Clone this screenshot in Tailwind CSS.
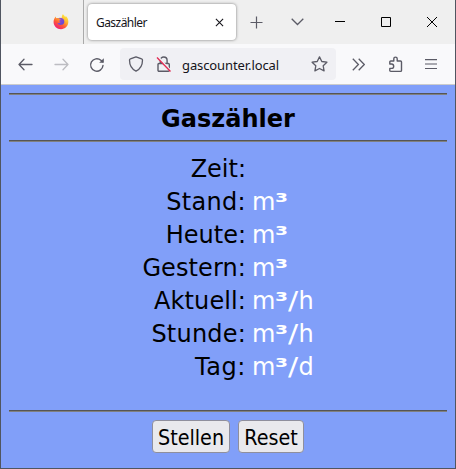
<!DOCTYPE html>
<html lang="de">
<head>
<meta charset="utf-8">
<title>Gaszähler</title>
<script src="https://cdn.jsdelivr.net/npm/@tailwindcss/browser@4"></script>
</head>
<body class="w-[456px] h-[469px] overflow-hidden bg-[#505560]">
<div class="flex flex-col w-[456px] h-[469px] border-x border-b border-[#505560] overflow-hidden">
  <header class="flex h-[44px] shrink-0 bg-[#efefef] font-['Noto_Sans',sans-serif]">
    <div class="w-[83px] shrink-0 border-r border-[#aaaaaa] pl-[52px] pt-[14px]">
      <svg class="block" width="16" height="16" viewBox="0 0 17 17">
        <defs>
          <linearGradient id="fox" x1=".85" y1=".05" x2=".25" y2="1"><stop offset="0" stop-color="#fff044"/><stop offset=".35" stop-color="#ffb52e"/><stop offset=".65" stop-color="#ff5a36"/><stop offset="1" stop-color="#ee1680"/></linearGradient>
          <linearGradient id="globe" x1="0" y1="0" x2="1" y2="1"><stop offset="0" stop-color="#a249cf"/><stop offset="1" stop-color="#5848d7"/></linearGradient>
        </defs>
        <path fill="url(#fox)" d="M10.3.2c1.3.8 2 1.8 2.5 3 .5-.1.8-.5.9-1 1.700 1.500 2.600 3.700 2.600 6.100 0 4.500-3.500 7.900-7.800 7.900S.6 12.800.6 8.500C.6 6.300 1.500 4.200 3 2.700c0 .8.2 1.300.5 1.700.8-.3 1.700-.3 2.500-.1 1-.3 2.100-.3 3 .1C9.300 2.800 9.700 1.500 10.300.2Z"/>
        <path fill="url(#globe)" d="M5.500 5.200c1.800-1.300 4.600-1.100 6 .8 1.300 2.300.2 5-2.500 5.500-2 .4-3.800-.6-4.400-2.300 1.400.8 2.800.2 3.500-.7-1.300 0-1.700-.7-1.500-1.300.5-.6 1.400-.5 2-.8-.8-.9-1.900-1.100-3.100-1.200Z"/>
      </svg>
    </div>
    <div class="ml-[4px] mt-[4px] flex h-[36px] w-[148px] shrink-0 items-center justify-between rounded-[4px] bg-white pl-[8px] pr-[12px] shadow-[0_0_3px_rgba(0,0,0,0.5)]">
      <span class="text-[12px] leading-[16px] tracking-[-0.55px] text-[#15141a] pt-px">Gaszähler</span>
      <svg width="9" height="9" viewBox="0 0 10 10" fill="none" stroke="#15141a" stroke-width="1.2"><path d="M1 1l8 8M9 1L1 9"/></svg>
    </div>
    <svg class="ml-[14px] mt-[16px] shrink-0" width="13" height="13" viewBox="0 0 13 13" fill="none" stroke="#5b5b66" stroke-width="1.2"><path d="M6.500.5v12M.5 6.500h12"/></svg>
    <svg class="ml-[28px] mt-[18px] shrink-0" width="13" height="8" viewBox="0 0 13 8" fill="none" stroke="#5b5b66" stroke-width="1.3"><path d="M.7.8l5.800 5.700L12.300.8"/></svg>
    <svg class="ml-[31px] mt-[17px] shrink-0" width="11" height="10" viewBox="0 0 11 10"><path d="M0 4.500h10" stroke="#000"/></svg>
    <svg class="ml-[35px] mt-[17px] shrink-0" width="10" height="10" viewBox="0 0 10 10"><path d="M.5.5h9v9h-9z" fill="none" stroke="#000"/></svg>
    <svg class="ml-[36px] mt-[17px] shrink-0" width="10" height="10" viewBox="0 0 10 10"><path d="M0 0l10 10M10 0L0 10" fill="none" stroke="#000" stroke-width="1"/></svg>
  </header>
  <nav class="flex h-[41px] shrink-0 border-b border-[#cccccc] bg-[#f9f9fb] font-['Noto_Sans',sans-serif]">
    <svg class="ml-[17px] mt-[14px] shrink-0" width="15" height="13" viewBox="0 0 15 13" fill="none" stroke="#5b5b66" stroke-width="1.3" stroke-linecap="round" stroke-linejoin="round"><path d="M14 6.500H1M6 1.300L1 6.500l5 5.200"/></svg>
    <svg class="ml-[21px] mt-[14px] shrink-0" width="15" height="13" viewBox="0 0 15 13" fill="none" stroke="#bdbdc2" stroke-width="1.3" stroke-linecap="round" stroke-linejoin="round"><path d="M1 6.500h13M9 1.300l5 5.200-5 5.200"/></svg>
    <svg class="ml-[20px] mt-[13px] shrink-0" width="16" height="16" viewBox="0 0 16 16" fill="none" stroke="#5b5b66" stroke-width="1.4" stroke-linecap="round"><path d="M14 8.500a6.200 6.200 0 1 1-2.100-5.200l1.600 1.500"/><path d="M14.800 1.200v4.600h-4.600z" fill="#5b5b66" stroke="none"/></svg>
    <div class="ml-[15px] mt-[4px] flex h-[32px] w-[216px] shrink-0 rounded-[4px] bg-[#f0f0f4]">
      <svg class="ml-[8px] mt-[8px] shrink-0" width="16" height="16" viewBox="0 0 16 16" fill="none" stroke="#5b5b66" stroke-width="1.3" stroke-linejoin="round"><path d="M8 .8l5.600 2.100c.6.200.9.600.9 1.200 0 4.800-2 9-6.500 11.100C3.500 13.100 1.500 8.900 1.500 4.100c0-.6.300-1 .9-1.200z"/></svg>
      <svg class="ml-[12px] mt-[8px] shrink-0" width="16" height="17" viewBox="0 0 16 17" fill="none"><path d="M4.300 7.500V4.400a3.400 3.400 0 0 1 6.800 0v3.100M3 7.500h9.300a1 1 0 0 1 1 1v5.700a1 1 0 0 1-1 1H3a1 1 0 0 1-1-1V8.500a1 1 0 0 1 1-1z" stroke="#5b5b66" stroke-width="1.4"/><path d="M1.800.8l13 14.200" stroke="#f0f0f4" stroke-width="2"/><path d="M1 1.500l13.500 14" stroke="#e22850" stroke-width="1.300"/></svg>
      <span class="ml-[10px] mt-[8px] w-[98px] shrink-0 whitespace-nowrap text-[13px] leading-[18px] tracking-[-0.1px] text-[#15141a]">gascounter.local</span>
      <svg class="ml-[31px] mt-[8px] shrink-0" width="17" height="16" viewBox="0 0 17 16" fill="none" stroke="#5b5b66" stroke-width="1.3" stroke-linejoin="round"><path d="M8.500.9l2.300 4.600 5.100.7-3.700 3.600.9 5.100-4.600-2.400-4.600 2.400.9-5.100L1.100 6.200l5.100-.7z"/></svg>
    </div>
    <svg class="ml-[16px] mt-[14px] shrink-0" width="13" height="13" viewBox="0 0 13 13" fill="none" stroke="#5b5b66" stroke-width="1.3"><path d="M.8.800L6.400 6.500.8 12.200M6.700.8l5.600 5.700-5.600 5.700"/></svg>
    <svg class="ml-[23px] mt-[12px] shrink-0" width="16" height="17" viewBox="0 0 16 17" fill="none" stroke="#5b5b66" stroke-width="1.4" stroke-linejoin="round"><path d="M1.800 8V6a1 1 0 0 1 1-1h3V2.800a1.700 1.700 0 0 1 3.400 0V5h3.300a1 1 0 0 1 1 1v8.400a1 1 0 0 1-1 1H2.800a1 1 0 0 1-1-1v-2h1.700a2.200 2.200 0 0 0 0-4.400z"/></svg>
    <svg class="ml-[21px] mt-[15px] shrink-0" width="12" height="11" viewBox="0 0 12 11" stroke="#5b5b66" stroke-width="1.200"><path d="M0 .6h12M0 5h12M0 9.500h12"/></svg>
  </nav>
  <main class="flex-1 bg-[#819ff9] px-[8px] pt-[8px] font-['DejaVu_Sans',sans-serif] text-black">
    <hr class="h-[2px] border-0 border-t border-b border-t-[#555555] border-b-[#808080]">
    <h1 class="h-[45px] pt-[9px] text-center text-[24px] leading-[30px] font-bold">Gaszähler</h1>
    <hr class="h-[2px] border-0 border-t border-b border-t-[#555555] border-b-[#808080]">
    <div class="grid h-[268px] auto-rows-[33px] grid-cols-[237px_1fr] content-start gap-x-[6px] pt-[11px] text-[24px] leading-[33px]">
      <div class="text-right">Zeit:</div><div></div>
      <div class="text-right tracking-[0.3px]">Stand:</div><div class="text-white">m<span class="inline-block origin-left scale-x-125 w-[12.500px] font-bold">³</span></div>
      <div class="text-right">Heute:</div><div class="text-white">m<span class="inline-block origin-left scale-x-125 w-[12.500px] font-bold">³</span></div>
      <div class="text-right tracking-[0.1px]">Gestern:</div><div class="text-white">m<span class="inline-block origin-left scale-x-125 w-[12.500px] font-bold">³</span></div>
      <div class="text-right tracking-[0.1px]">Aktuell:</div><div class="text-white">m<span class="inline-block origin-left scale-x-125 w-[12.500px] font-bold">³</span><span class="inline-block origin-left scale-x-125 w-[10.500px]">/</span>h</div>
      <div class="text-right tracking-[0.2px]">Stunde:</div><div class="text-white">m<span class="inline-block origin-left scale-x-125 w-[12.500px] font-bold">³</span><span class="inline-block origin-left scale-x-125 w-[10.500px]">/</span>h</div>
      <div class="text-right tracking-[0.6px]">Tag:</div><div class="text-white">m<span class="inline-block origin-left scale-x-125 w-[12.500px] font-bold">³</span><span class="inline-block origin-left scale-x-125 w-[10.500px]">/</span>d</div>
    </div>
    <hr class="h-[2px] border-0 border-t border-b border-t-[#555555] border-b-[#808080]">
    <div class="flex gap-[8px] pl-[143px] pt-[8px] font-['DejaVu_Sans_Condensed','DejaVu_Sans',sans-serif] text-[21.300px] font-stretch-condensed">
      <button class="h-[33px] w-[78px] rounded-[4px] border border-[#8f8f9d] bg-[#e9e9ed] pt-px leading-[31px]">Stellen</button>
      <button class="h-[33px] w-[66px] rounded-[4px] border border-[#8f8f9d] bg-[#e9e9ed] pt-px leading-[31px]">Reset</button>
    </div>
  </main>
</div>
</body>
</html>
